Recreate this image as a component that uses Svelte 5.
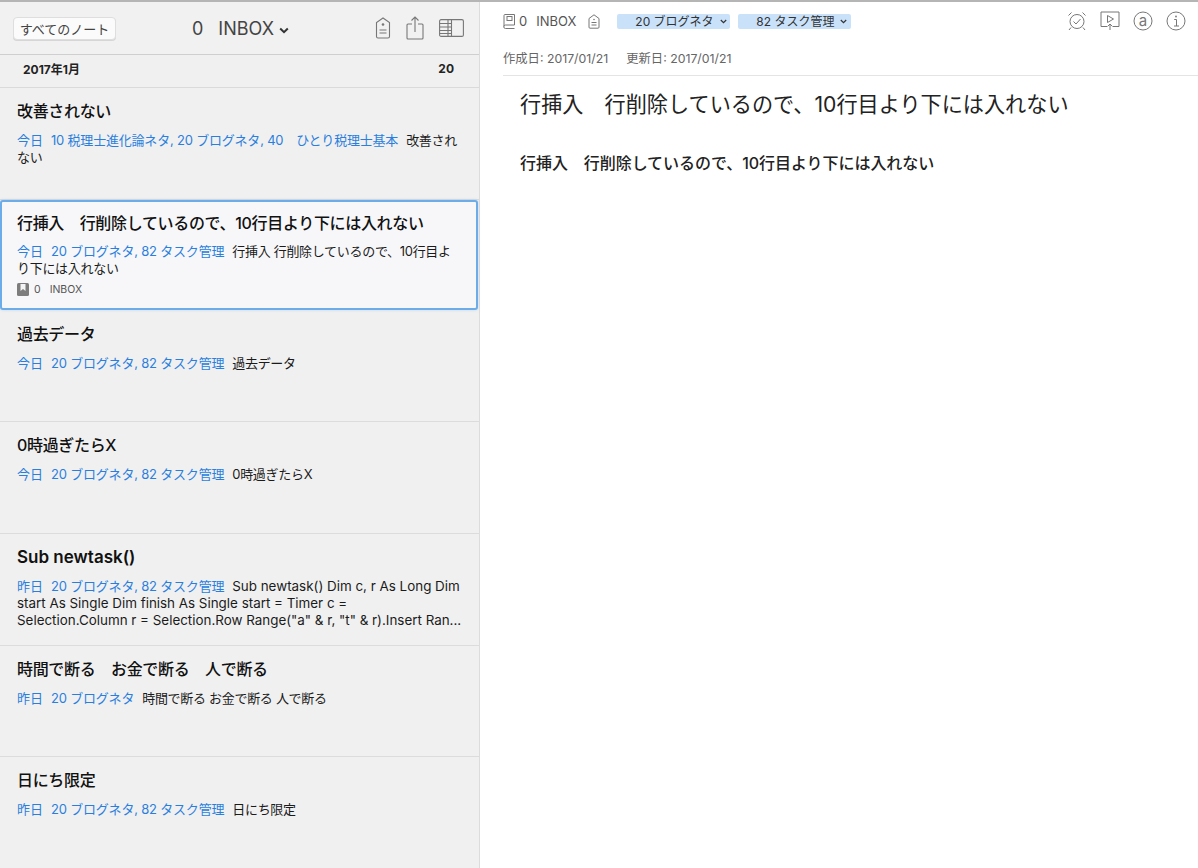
<script lang="ts">
  const notes = [
    { title: '改善されない', date: '今日', tags: '10 税理士進化論ネタ, 20 ブログネタ, 40　ひとり税理士基本', body: '改善されない' },
    { title: '行挿入　行削除しているので、10行目より下には入れない', date: '今日', tags: '20 ブログネタ, 82 タスク管理', body: '行挿入 行削除しているので、10行目より下には入れない', selected: true },
    { title: '過去データ', date: '今日', tags: '20 ブログネタ, 82 タスク管理', body: '過去データ' },
    { title: '0時過ぎたらX', date: '今日', tags: '20 ブログネタ, 82 タスク管理', body: '0時過ぎたらX' },
    { title: 'Sub newtask()', date: '昨日', tags: '20 ブログネタ, 82 タスク管理', body: 'Sub newtask() Dim c, r As Long Dim start As Single Dim finish As Single start = Timer c =\nSelection.Column r = Selection.Row Range("a" & r, "t" & r).Insert Ran...', latin: true },
    { title: '時間で断る　お金で断る　人で断る', date: '昨日', tags: '20 ブログネタ', body: '時間で断る お金で断る 人で断る' },
    { title: '日にち限定', date: '昨日', tags: '20 ブログネタ, 82 タスク管理', body: '日にち限定' }
  ];
</script>

<div class="app">
  <aside class="list">
    <header class="list-head">
      <button class="all">すべてのノート</button>
      <div class="nb-title">
        <span>0</span><span>INBOX</span>
        <svg class="caret" width="10" height="7" viewBox="0 0 10 7"><path d="M1.2 1.5 5 5.2l3.8-3.7" fill="none" stroke="#333" stroke-width="2"/></svg>
      </div>
      <div class="head-icons">
        <svg width="16" height="22" viewBox="0 0 16 22" fill="none" stroke="#777" stroke-width="1.1"><path d="M8 1 1.500 5.500v14a1.500 1.500 0 0 0 1.500 1.500h10a1.500 1.500 0 0 0 1.500-1.500v-14z"/><circle cx="8" cy="7.500" r="1.300" fill="#777" stroke="none"/><path d="M4.500 13h7M4.500 16h7"/></svg>
        <svg width="18" height="24" viewBox="0 0 18 24" fill="none" stroke="#777" stroke-width="1.100"><path d="M6 8H2a1 1 0 0 0-1 1v13a1 1 0 0 0 1 1h14a1 1 0 0 0 1-1V9a1 1 0 0 0-1-1h-4M9 16V1M5.500 4.500 9 1l3.500 3.500"/></svg>
        <svg width="25" height="18" viewBox="0 0 25 18" fill="none" stroke="#777" stroke-width="1.100"><rect x=".6" y=".6" width="23.800" height="16.800" rx="1.500"/><path d="M12.500.6v16.800M9 .6v16.800M.6 4.500h12M.6 8h12M.6 11.500h12M.6 14.500h12"/></svg>
      </div>
    </header>
    <div class="month"><span>2017年1月</span><span>20</span></div>
    {#each notes as n}
      <article class="note" class:selected={n.selected} class:latin={n.latin}>
        <h2>{n.title}</h2>
        <p><span class="meta">{n.date}</span><span class="meta tags">{n.tags}</span><span class="body">{n.body}</span></p>
        {#if n.selected}
          <div class="nb">
            <svg width="12" height="13" viewBox="0 0 12 13"><rect width="12" height="13" rx="1.500" fill="#7d7d7d"/><path d="M3.500 1h5v7L6 6 3.500 8z" fill="#f4f4f6"/></svg>
            <span>0</span><span class="nb-name">INBOX</span>
          </div>
        {/if}
      </article>
    {/each}
  </aside>

  <main class="detail">
    <div class="toolbar">
      <svg class="book" width="13" height="15" viewBox="0 0 13 15" fill="none" stroke="#777" stroke-width="1"><path d="M1 12.500V1.500a1 1 0 0 1 1-1h9.500v10.500H2.500a1.500 1.500 0 0 0 0 3.500h9"/><rect x="4" y="2.500" width="5" height="4"/></svg>
      <span class="tb-count">0</span>
      <span class="tb-name">INBOX</span>
      <svg class="tb-tag" width="12" height="15" viewBox="0 0 12 15" fill="none" stroke="#777" stroke-width="1"><path d="M6 .8 1 4.500v8.700a1 1 0 0 0 1 1h8a1 1 0 0 0 1-1V4.500z"/><circle cx="6" cy="5.500" r=".8" fill="#777" stroke="none"/><path d="M3.500 8.500h5M3.500 11h5"/></svg>
      <span class="chip first">20 ブログネタ<svg width="7" height="5" viewBox="0 0 7 5"><path d="M.8 1 3.500 3.700 6.200 1" fill="none" stroke="#333" stroke-width="1.200"/></svg></span>
      <span class="chip second">82 タスク管理<svg width="7" height="5" viewBox="0 0 7 5"><path d="M.8 1 3.500 3.700 6.200 1" fill="none" stroke="#333" stroke-width="1.200"/></svg></span>
      <div class="tb-right">
        <svg width="20" height="20" viewBox="0 0 20 20" fill="none" stroke="#777" stroke-width="1"><circle cx="10" cy="10.500" r="7"/><path d="m6.500 10.500 2.500 2.500 4.500-5M1.500 4.500 4.500 1.500M18.500 4.500l-3-3M4 16.500l-2 2.500M16 16.500l2 2.500"/></svg>
        <svg width="20" height="20" viewBox="0 0 20 20" fill="none" stroke="#777" stroke-width="1"><path d="M7 15.500H1V1h18v14.500h-6"/><path d="M7.500 4.500v7l6-3.500z"/><path d="M10 19v-6M7.500 15.500 10 13l2.500 2.500"/></svg>
        <svg width="20" height="20" viewBox="0 0 20 20" fill="none" stroke="#777" stroke-width="1"><circle cx="10" cy="10" r="9"/><text x="10" y="14.500" text-anchor="middle" class="glyph">a</text></svg>
        <svg width="20" height="20" viewBox="0 0 20 20" fill="none" stroke="#777" stroke-width="1"><circle cx="10" cy="10" r="9"/><circle cx="10" cy="5.500" r=".9" fill="#777" stroke="none"/><path d="M8.200 8.500H10.500V15M8 15h5"/></svg>
      </div>
    </div>
    <div class="dates"><span>作成日: 2017/01/21</span><span>更新日: 2017/01/21</span></div>
    <div class="doc">
      <h1>行挿入　行削除しているので、10行目より下には入れない</h1>
      <p>行挿入　行削除しているので、10行目より下には入れない</p>
    </div>
  </main>
</div>

<style>
  :global(body) {
    margin: 0;
    background: #fff;
    font-family: Inter, "Noto Sans CJK JP", sans-serif;
    color: #111;
  }

  .app {
    display: flex;
    height: 868px;
    overflow: hidden;
    border-top: 2px solid #b5b5b5;
    box-sizing: border-box;
  }

  .list {
    width: 480px;
    flex: none;
    box-sizing: border-box;
    background: #f0f0f0;
    border-right: 1px solid #dcdcdc;
  }

  .list-head {
    height: 53px;
    display: flex;
    align-items: center;
    box-sizing: border-box;
    padding: 0 15px 0 13px;
    border-bottom: 1px solid #cfcfcf;
    background: #f1f1f1;
  }

  .all {
    width: 103px;
    height: 23px;
    padding: 0;
    font: 13px Inter, "Noto Sans CJK JP", sans-serif;
    color: #444;
    background: #fbfbfb;
    border: 1px solid #dedede;
    border-radius: 4px;
    box-shadow: 0 1px 0 #d6d6d6;
  }

  .nb-title {
    display: flex;
    align-items: center;
    gap: 15px;
    margin-left: 76px;
    font-size: 18px;
    color: #444;
  }

  .caret { margin: 4px 0 0 -10px; }

  .head-icons {
    margin-left: auto;
    display: flex;
    align-items: center;
    gap: 15px;
  }

  .month {
    height: 33px;
    display: flex;
    justify-content: space-between;
    align-items: center;
    box-sizing: border-box;
    padding: 0 25px 6px 23px;
    font-size: 12px;
    font-weight: 700;
    color: #222;
    border-bottom: 1px solid #dadada;
  }

  .note {
    height: 111.700px;
    box-sizing: border-box;
    padding: 12px 17px 0;
    border-bottom: 1px solid #dcdcdc;
  }

  .note.selected {
    padding: 10px 15px 0;
    margin: 0 1px 1px 0;
    height: 110px;
    background: #f7f7f9;
    border: 2px solid #6cade9;
    border-radius: 3px;
    box-shadow: 0 0 3px rgba(108, 173, 233, .35);
  }

  h2 {
    margin: 0 0 10px;
    font-size: 16px;
    line-height: 22px;
    font-weight: 500;
    letter-spacing: -.33px;
    color: #111;
  }

  .selected h2 { margin-bottom: 9px; }

  .latin h2 {
    font-size: 17px;
    font-weight: 600;
    letter-spacing: 0;
  }

  .note p {
    margin: 0;
    font-size: 13px;
    line-height: 17px;
    color: #1b1b1b;
  }

  .meta { color: #2a7fde; }
  .tags { margin-left: 8px; letter-spacing: -.2px; }
  .body { margin-left: 8px; letter-spacing: -.3px; }
  .latin .body { font-size: 13.400px; letter-spacing: 0; white-space: pre-line; }

  .nb {
    display: flex;
    align-items: center;
    gap: 5px;
    margin-top: 6px;
    font-size: 10.500px;
    color: #555;
  }

  .nb-name { margin-left: 4px; }

  .detail {
    flex: 1;
    min-width: 0;
  }

  .toolbar {
    height: 36px;
    display: flex;
    align-items: center;
    padding: 0 12px 0 23px;
    box-sizing: border-box;
    margin-top: 1px;
    font-size: 13px;
    color: #555;
  }

  .book { margin-right: 3px; }
  .tb-name { margin-left: 9px; }
  .tb-tag { margin-left: 12px; }

  .chip {
    height: 15px;
    display: flex;
    align-items: center;
    gap: 6px;
    box-sizing: border-box;
    background: #c9e2fa;
    border-radius: 2px;
    font-size: 12px;
    line-height: 15px;
    color: #333;
  }

  .chip.first { width: 113px; margin-left: 17px; padding-left: 18px; }
  .chip.second { width: 113px; margin-left: 8px; padding-left: 18px; }

  .tb-right {
    margin-left: auto;
    display: flex;
    align-items: center;
    gap: 13px;
  }

  .glyph {
    font: 15px Inter, sans-serif;
    fill: #777;
    stroke: none;
  }

  .dates {
    height: 37px;
    margin-left: 23px;
    display: flex;
    align-items: center;
    gap: 18px;
    box-sizing: border-box;
    padding-top: 2px;
    font-size: 12.300px;
    color: #666;
    border-bottom: 1px solid #e4e4e4;
  }

  .doc { padding: 15px 40px; }

  h1 {
    margin: 0;
    font-size: 21.150px;
    line-height: 28px;
    font-weight: 400;
    color: #222;
  }

  .doc p {
    margin: 34px 0 0;
    font-size: 16px;
    line-height: 20px;
    font-weight: 500;
    letter-spacing: -.05px;
    color: #222;
  }
</style>
